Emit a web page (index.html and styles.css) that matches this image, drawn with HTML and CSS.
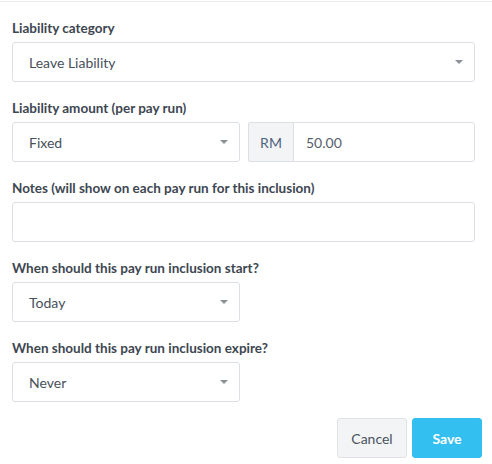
FILE: index.html
```html
<!DOCTYPE html>
<html>
<head>
    <title>Pay Run Inclusion</title>
    <link rel="stylesheet" href="styles.css">
</head>
<body>

<div class="panel">
    <div class="form-group">
        <label class="field-label">Liability category</label>
        <div class="select-wrap">
            <select class="form-control">
                <option>Leave Liability</option>
            </select>
        </div>
    </div>

    <div class="form-group">
        <label class="field-label">Liability amount (per pay run)</label>
        <div class="field-row">
            <div class="select-wrap half">
                <select class="form-control">
                    <option>Fixed</option>
                </select>
            </div>
            <div class="input-group half">
                <span class="addon">RM</span>
                <input class="form-control amount" type="text" value="50.00">
            </div>
        </div>
    </div>

    <div class="form-group">
        <label class="field-label">Notes (will show on each pay run for this inclusion)</label>
        <input class="form-control" type="text">
    </div>

    <div class="form-group">
        <label class="field-label">When should this pay run inclusion start?</label>
        <div class="select-wrap half">
            <select class="form-control">
                <option>Today</option>
            </select>
        </div>
    </div>

    <div class="form-group">
        <label class="field-label">When should this pay run inclusion expire?</label>
        <div class="select-wrap half">
            <select class="form-control">
                <option>Never</option>
            </select>
        </div>
    </div>

    <div class="actions">
        <button class="btn btn-default">Cancel</button>
        <button class="btn btn-primary">Save</button>
    </div>
</div>

</body>
</html>
```

FILE: styles.css
```css
body {
    margin: 0;
    background: #ffffff;
    font-family: 'Lato', 'Liberation Sans', sans-serif;
    font-size: 14px;
    color: #3c4550;
}
.panel {
    margin-top: 1px;
    border-top: 1px solid #e9ebed;
    padding: 18px 17px 0 12px;
}
.form-group {
    margin-bottom: 18px;
}
.field-label {
    display: block;
    font-weight: 700;
    font-size: 13.5px;
    line-height: 16px;
    margin-bottom: 6px;
    color: #3d4651;
}
.field-row {
    display: flex;
    gap: 8px;
}
.half {
    width: 228px;
    flex: none;
}
.field-row .input-group {
    width: 227px;
}
.form-control {
    display: block;
    box-sizing: border-box;
    width: 100%;
    height: 40px;
    margin: 0;
    padding: 0 16px;
    border: 1px solid #dcdfe3;
    border-radius: 3px;
    background: #ffffff;
    font-family: inherit;
    font-size: 14px;
    color: #47505b;
    outline: none;
}
select.form-control {
    appearance: none;
    -webkit-appearance: none;
}
.select-wrap {
    position: relative;
}
/* small caret drawn over the right side of each select */
.select-wrap::after {
    content: '';
    position: absolute;
    right: 12px;
    top: 18px;
    border-left: 4px solid transparent;
    border-right: 4px solid transparent;
    border-top: 4px solid #8b9198;
    pointer-events: none;
}
.input-group {
    display: flex;
}
.addon {
    display: flex;
    align-items: center;
    justify-content: center;
    box-sizing: border-box;
    width: 45px;
    height: 40px;
    flex: none;
    background: #f3f4f6;
    border: 1px solid #dcdfe3;
    border-right: none;
    border-radius: 3px 0 0 3px;
    color: #4d6480;
}
.input-group .amount {
    border-radius: 0 3px 3px 0;
    padding-left: 12px;
    color: #56606b;
}
.actions {
    display: flex;
    justify-content: flex-end;
    gap: 5px;
    margin-top: -2px;
    margin-right: -7px;
}
.btn {
    height: 40px;
    border-radius: 3px;
    font-family: inherit;
    font-size: 14px;
    cursor: pointer;
}
.btn-default {
    width: 70px;
    background: #f3f4f6;
    border: 1px solid #e0e2e5;
    color: #4a535e;
}
.btn-primary {
    width: 70px;
    background: #33c0f0;
    border: 1px solid #33c0f0;
    color: #ffffff;
    font-weight: 700;
}
```
